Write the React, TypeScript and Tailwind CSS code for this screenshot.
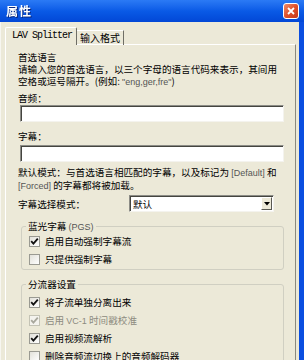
import React from "react";

const cjk = "font-['Noto_Sans_CJK_SC','Noto_Sans_CJK_JP',sans-serif]";
const lat = "font-['Liberation_Sans',sans-serif] text-[9px] leading-none text-[#555]";

type CheckProps = { label: React.ReactNode; checked?: boolean; disabled?: boolean };

const Check = ({ label, checked, disabled }: CheckProps) => {
  return (
    <div className="flex items-center h-[18px] pl-[7px] gap-[5px]">
      <div
        className={
          "w-[11px] h-[11px] border flex items-center justify-center " +
          (disabled ? "border-[#c4c3b5] bg-[#f4f3ee]" : "border-[#9a9a92] bg-gradient-to-br from-[#e2e1da] to-white")
        }
      >
        {checked && (
          <svg width="9" height="9" viewBox="0 0 9 9">
            <path
              d="M1.2 4.2 L3.4 6.6 L7.8 1.6"
              fill="none"
              stroke={disabled ? "#a8a79c" : "#111"}
              strokeWidth="1.8"
            />
          </svg>
        )}
      </div>
      <span className={"whitespace-nowrap " + (disabled ? "text-[#8c8b80]" : "text-black")}>{label}</span>
    </div>
  );
};

const Field = () => (
  <div className="ml-[2px] h-[17px] bg-white border border-t-[#8c8c86] border-l-[#8c8c86] border-b-[#f4f3ee] border-r-[#f4f3ee] shadow-[inset_1px_1px_0_#45453f]" />
);

const App = () => {
  return (
    <div className={"w-[304px] h-[360px] overflow-hidden bg-[#0a4ee0] flex flex-col text-[9.6px] leading-[12px] whitespace-nowrap " + cjk}>
      {/* title bar */}
      <div className="h-[22px] shrink-0 flex items-center justify-between pl-[6px] pr-[5px] bg-gradient-to-b from-[#2b7af5] via-[#0a5ae6] to-[#0347d6]">
        <span className="text-white font-bold text-[12px] tracking-[1px] drop-shadow-[1px_1px_0_#0a2a80]">属性</span>
        <div className="w-[16px] h-[16px] rounded-[3px] border border-white bg-gradient-to-br from-[#ef8a68] via-[#e0502a] to-[#c4381a] flex items-center justify-center">
          <svg width="10" height="10" viewBox="0 0 10 10">
            <path d="M2 2 L8 8 M8 2 L2 8" stroke="white" strokeWidth="1.8" />
          </svg>
        </div>
      </div>

      {/* dialog body */}
      <div className="flex-1 mr-[5px] bg-[#ece9d8] border-l border-l-[#f7f6f0] pl-[4px] pr-[3px] pt-[5px] flex flex-col">
        {/* tabs */}
        <div className="flex items-end relative z-10 -mb-px">
          <div className="h-[18px] w-[72px] bg-[#ece9d8] border-l border-t border-white border-r border-r-[#6f6e66] rounded-t-[2px] flex items-center pl-[6px] pb-[2px]">
            <span className="font-['Liberation_Mono',monospace] text-[10px] tracking-[-1px] text-black">LAV Splitter</span>
          </div>
          <div className="h-[15px] w-[47px] border-t border-white border-r border-r-[#6f6e66] flex items-center pl-[3px] text-[10px]">
            <span>输入格式</span>
          </div>
        </div>

        {/* tab panel */}
        <div className="flex-1 border-t border-l border-white border-r border-r-[#8a897f] pl-[12px] pr-[11px] pt-[6px] flex flex-col">
          <div>
            <div>首选语言</div>
            <div>请输入您的首选语言，以三个字母的语言代码来表示，其间用</div>
            <div>
              空格或逗号隔开。(例如: <span className={lat}>"eng,ger,fre"</span>)
            </div>
          </div>

          <div className="mt-[5px]">音频：</div>
          <div className="mt-[1px]">
            <Field />
          </div>

          <div className="mt-[8px]">字幕：</div>
          <div className="mt-[3px]">
            <Field />
          </div>

          <div className="mt-[4px] leading-[13px]">
            <div>
              默认模式：与首选语言相匹配的字幕，以及标记为 <span className={lat}>[Default]</span> 和
            </div>
            <div>
              <span className={lat}>[Forced]</span> 的字幕都将被加载。
            </div>
          </div>

          <div className="mt-[3px] h-[17px] flex items-center">
            <span className="w-[111px]">字幕选择模式：</span>
            <div className="w-[145px] h-[17px] bg-white border border-t-[#8c8c86] border-l-[#8c8c86] border-b-[#f4f3ee] border-r-[#f4f3ee] shadow-[inset_1px_1px_0_#45453f] flex items-center justify-between pl-[3px] pr-[1px]">
              <span>默认</span>
              <div className="w-[11px] h-[13px] bg-[#ece9d8] border border-t-white border-l-white border-b-[#5a5952] border-r-[#5a5952] flex items-center justify-center">
                <svg width="6" height="4" viewBox="0 0 6 4">
                  <path d="M0 0 L6 0 L3 3.5 Z" fill="#000" />
                </svg>
              </div>
            </div>
          </div>

          <fieldset className="mt-[8px] ml-[3px] border border-[#d0cfc2] rounded-[3px] pb-[1px] px-0">
            <legend className="ml-[4px] px-[2px] leading-[12px]">
              蓝光字幕 <span className={lat}>(PGS)</span>
            </legend>
            <Check checked label="启用自动强制字幕流" />
            <Check label="只提供强制字幕" />
          </fieldset>

          <fieldset className="mt-[8px] ml-[3px] border border-[#d0cfc2] rounded-[3px] pt-[3px] px-0">
            <legend className="ml-[4px] px-[2px] leading-[12px]">分流器设置</legend>
            <Check checked label="将子流单独分离出来" />
            <Check
              checked
              disabled
              label={
                <>
                  启用 <span className="font-['Liberation_Sans',sans-serif] text-[9px] leading-none">VC-1</span> 时间戳校准
                </>
              }
            />
            <Check checked label="启用视频流解析" />
            <Check label="删除音频流切换上的音频解码器" />
          </fieldset>
        </div>
      </div>
    </div>
  );
};

export default App;
